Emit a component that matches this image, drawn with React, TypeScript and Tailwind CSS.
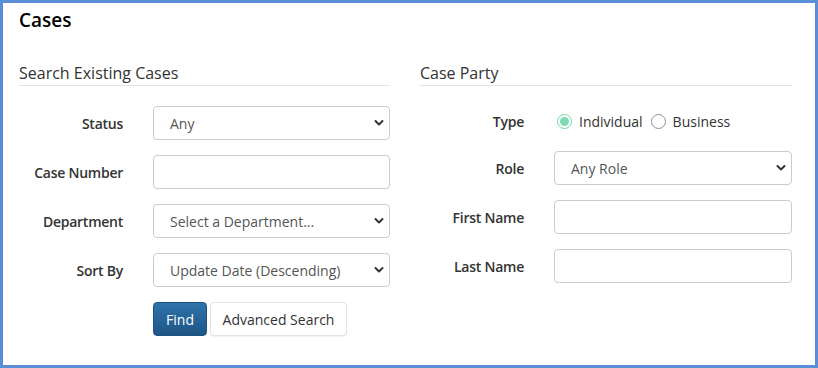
const font = { fontFamily: '"Open Sans", "Noto Sans", sans-serif' };

const Chevron = () => (
  <svg
    className="pointer-events-none absolute right-[6px] top-1/2 -translate-y-1/2"
    width="10"
    height="7"
    viewBox="0 0 10 7"
    fill="none"
  >
    <path d="M1.5 1.5 L5 5 L8.5 1.5" stroke="#333" strokeWidth="2" strokeLinecap="round" strokeLinejoin="round" />
  </svg>
);

const Select = ({ value }: { value: string }) => (
  <div className="relative h-[34px]">
    <select
      defaultValue={value}
      className="h-full w-full appearance-none rounded-[4px] border border-[#cccccc] bg-white pl-4 text-[14px] text-[#555555] outline-none"
    >
      <option>{value}</option>
    </select>
    <Chevron />
  </div>
);

const TextInput = () => (
  <input
    type="text"
    className="h-[34px] w-full rounded-[4px] border border-[#cccccc] bg-white px-3 text-[14px] text-[#555555] outline-none"
  />
);

const Label = ({ children }: { children: React.ReactNode }) => (
  <label className="text-right text-[14px] font-semibold tracking-[-0.25px] text-[#333333]">
    {children}
  </label>
);

const Radio = ({ checked, label }: { checked?: boolean; label: string }) => (
  <label className="flex items-center gap-[7px] text-[14px] text-[#333333]">
    {checked ? (
      <span className="flex h-[15px] w-[15px] items-center justify-center rounded-full border-[1.5px] border-[#6fd6ab]">
        <span className="h-[9px] w-[9px] rounded-full bg-[#7ddcb4]" />
      </span>
    ) : (
      <span className="h-[15px] w-[15px] rounded-full border border-[#8b909b] bg-white" />
    )}
    {label}
  </label>
);

const App = () => {
  return (
    <div
      style={font}
      className="h-[368px] w-[818px] border-[3px] border-[#5a8fd8] bg-white pl-4 pr-[23px] pt-[3px]"
    >
      <h1 className="text-[19px] font-semibold leading-[28px] text-black">
        Cases
      </h1>

      <div className="mt-[27px] grid grid-cols-[371px_1fr] gap-x-[30px]">
        <section>
          <h2 className="h-[25px] border-b border-[#e5e5e5] text-[16px] leading-[24px] text-[#333333]">
            Search Existing Cases
          </h2>

          <div className="mt-[20px] grid grid-cols-[104px_1fr] items-center gap-x-[30px] gap-y-[15px]">
            <Label>Status</Label>
            <Select value="Any" />

            <Label>Case Number</Label>
            <TextInput />

            <Label>Department</Label>
            <Select value="Select a Department..." />

            <Label>Sort By</Label>
            <Select value="Update Date (Descending)" />

            <div />
            <div className="flex gap-[3px]">
              <button
                type="button"
                className="h-[34px] w-[54px] rounded-[4px] border border-[#1d527f] bg-gradient-to-b from-[#2f72ab] to-[#1e5686] text-[14px] text-white"
              >
                Find
              </button>
              <button
                type="button"
                className="h-[34px] w-[137px] rounded-[4px] border border-[#e2e2e2] bg-white text-[14px] text-[#333333] shadow-[0_1px_1px_rgba(0,0,0,0.05)]"
              >
                Advanced Search
              </button>
            </div>
          </div>
        </section>

        <section>
          <h2 className="h-[25px] border-b border-[#e5e5e5] text-[16px] leading-[24px] text-[#333333]">
            Case Party
          </h2>

          <div className="mt-[20px] grid grid-cols-[104px_1fr] items-center gap-x-[30px] gap-y-[15px]">
            <Label>Type</Label>
            <div className="flex h-[30px] items-center gap-[8px] pl-[3px]">
              <Radio checked label="Individual" />
              <Radio label="Business" />
            </div>

            <Label>Role</Label>
            <Select value="Any Role" />

            <Label>First Name</Label>
            <TextInput />

            <Label>Last Name</Label>
            <TextInput />
          </div>
        </section>
      </div>
    </div>
  );
};

export default App;
